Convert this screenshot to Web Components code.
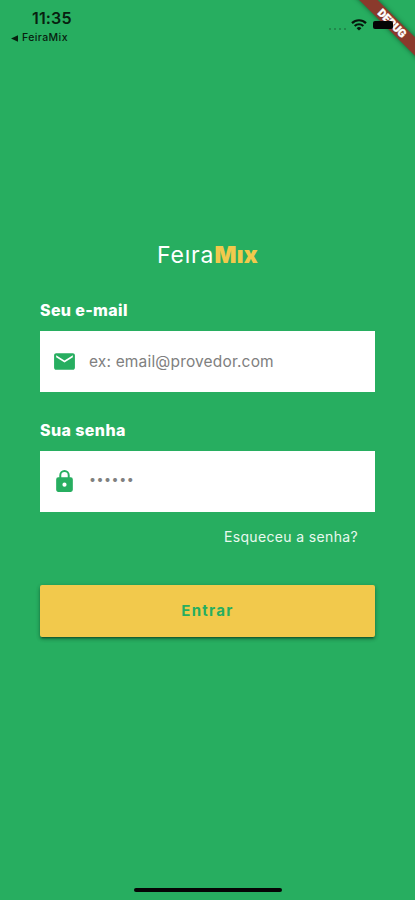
<!DOCTYPE html>
<html lang="pt-BR">
<head>
<meta charset="utf-8">
<meta name="viewport" content="width=device-width, initial-scale=1">
<title>FeiraMix</title>
<style>
  :root {
    --primary-color: #27ae60;
    --accent-color: #f2c94c;
  }
  body {
    margin: 0;
    background: var(--primary-color);
    font-family: Inter, "Open Sans", sans-serif;
  }
</style>
</head>
<body>
<login-page></login-page>

<script>
class StatusBar extends HTMLElement {
  connectedCallback() {
    this.attachShadow({ mode: 'open' });
    this.shadowRoot.innerHTML = `
      <style>
        :host {
          display: flex;
          justify-content: space-between;
          height: 50px;
          color: #08200f;
        }
        .left {
          padding: 8px 0 0 11px;
        }
        .time {
          padding-left: 21px;
          font-size: 16px;
          line-height: 20px;
          font-weight: 600;
          letter-spacing: 0.15px;
        }
        .back {
          display: flex;
          align-items: center;
          gap: 4px;
          margin-top: 3px;
          font-size: 10.5px;
          line-height: 14px;
          font-weight: 500;
          letter-spacing: 0.4px;
        }
        .right {
          position: relative;
          z-index: 2;
          display: flex;
          align-items: flex-start;
          padding: 18px 22px 0 0;
        }
        .signal {
          display: flex;
          gap: 3px;
          margin: 10px 5px 0 0;
        }
        .signal i {
          width: 2px;
          height: 2px;
          background: #20894b;
        }
        .battery {
          width: 20px;
          height: 8px;
          margin: 3px 0 0 6px;
          border-radius: 2px;
          background: #050505;
        }
      </style>
      <div class="left">
        <div class="time">11:35</div>
        <div class="back">
          <svg width="7" height="7" viewBox="0 0 7 7"><path fill="currentColor" d="M0 3.5 7 .3v6.4z"/></svg>
          <span>FeiraMix</span>
        </div>
      </div>
      <div class="right">
        <div class="signal"><i></i><i></i><i></i><i></i></div>
        <svg width="16" height="13" viewBox="0 0 16 13" fill="none" stroke="#06150b" stroke-width="2.2">
          <path d="M1 5.1a10 10 0 0 1 14 0M3.7 8a6.2 6.2 0 0 1 8.6 0"/>
          <path d="M8 12.6 5.6 10.2a3.5 3.5 0 0 1 4.8 0z" fill="#06150b" stroke="none"/>
        </svg>
        <div class="battery"></div>
      </div>
    `;
  }
}

class DebugBanner extends HTMLElement {
  connectedCallback() {
    this.attachShadow({ mode: 'open' });
    this.shadowRoot.innerHTML = `
      <style>
        :host {
          position: absolute;
          top: 0;
          right: 0;
          width: 70px;
          height: 70px;
          overflow: hidden;
        }
        div {
          position: absolute;
          left: -3px;
          top: 17.3px;
          width: 100px;
          height: 12.8px;
          transform: rotate(45deg);
          background: #8a3a2c;
          box-shadow: 0 0 5px rgba(0, 0, 0, 0.45);
          color: #fff;
          font: 900 11px/13px Roboto, sans-serif;
          text-align: center;
          -webkit-text-stroke: 0.4px #fff;
        }
      </style>
      <div><slot></slot></div>
    `;
  }
}

class BrandLogo extends HTMLElement {
  connectedCallback() {
    this.attachShadow({ mode: 'open' });
    this.shadowRoot.innerHTML = `
      <style>
        :host {
          display: block;
          text-align: center;
          font-size: 23px;
          line-height: 28px;
          color: #fff;
          white-space: nowrap;
        }
        .light { letter-spacing: 0.85px; }
        .heavy {
          color: var(--accent-color);
          font-weight: 900;
          letter-spacing: 0.3px;
        }
      </style>
      <span class="light">Feıra</span><span class="heavy">Mıx</span>
    `;
  }
}

class FormField extends HTMLElement {
  connectedCallback() {
    this.attachShadow({ mode: 'open' });
    this.shadowRoot.innerHTML = `
      <style>
        :host { display: block; }
        .label {
          color: #fff;
          font-size: 16px;
          line-height: 20px;
          font-weight: 800;
          letter-spacing: var(--label-spacing, 0);
        }
        .box {
          display: flex;
          align-items: center;
          gap: 12px;
          height: 61px;
          margin-top: 11px;
          padding-left: 12px;
          box-sizing: border-box;
          background: #fff;
        }
        .hint {
          color: #808080;
          font-size: var(--hint-size, 15.5px);
          line-height: 20px;
          letter-spacing: var(--hint-spacing, 0);
          padding-bottom: var(--hint-lift, 0);
        }
        ::slotted(svg) {
          display: block;
          fill: var(--primary-color);
        }
      </style>
      <div class="label">${this.getAttribute('label')}</div>
      <div class="box">
        <slot></slot>
        <span class="hint">${this.getAttribute('hint')}</span>
      </div>
    `;
  }
}

class SubmitButton extends HTMLElement {
  connectedCallback() {
    this.attachShadow({ mode: 'open' });
    this.shadowRoot.innerHTML = `
      <style>
        :host { display: block; }
        button {
          display: block;
          width: 100%;
          height: 52px;
          padding: 0 0 1px;
          border: 0;
          border-radius: 2px;
          background: var(--accent-color);
          color: var(--primary-color);
          font: inherit;
          font-size: 15px;
          font-weight: 700;
          letter-spacing: 1.3px;
          box-shadow: 0 3px 1px -2px rgba(0, 0, 0, 0.2), 0 2px 2px rgba(0, 0, 0, 0.14), 0 1px 5px rgba(0, 0, 0, 0.12), 0 2px 4px rgba(0, 0, 0, 0.2);
        }
      </style>
      <button type="button"><slot></slot></button>
    `;
  }
}

class LoginPage extends HTMLElement {
  connectedCallback() {
    this.attachShadow({ mode: 'open' });
    this.shadowRoot.innerHTML = `
      <style>
        :host {
          position: relative;
          display: flex;
          flex-direction: column;
          height: 900px;
          overflow: hidden;
          background: var(--primary-color);
        }
        main {
          flex: 1;
          padding: 191px 40px 0;
        }
        .email {
          margin-top: 31px;
          --label-spacing: 0.35px;
          --hint-spacing: 0.17px;
        }
        .password {
          margin-top: 28px;
          --label-spacing: 0.4px;
          --hint-size: 12.5px;
          --hint-spacing: 0.5px;
          --hint-lift: 3px;
        }
        .forgot {
          margin: 15px 17px 0 0;
          color: #e9f9ef;
          font-size: 14px;
          line-height: 20px;
          letter-spacing: 0.35px;
          text-align: right;
        }
        submit-button { margin-top: 38px; }
        .home {
          width: 148px;
          height: 4px;
          margin: 0 auto 8px;
          border-radius: 2px;
          background: #050505;
        }
      </style>
      <status-bar></status-bar>
      <debug-banner>DEBUG</debug-banner>
      <main>
        <brand-logo></brand-logo>
        <form-field class="email" label="Seu e-mail" hint="ex: email@provedor.com">
          <svg width="25" height="25" viewBox="0 0 24 24"><path d="M20 4H4c-1.100 0-2 .9-2 2v12c0 1.100.9 2 2 2h16c1.100 0 2-.9 2-2V6c0-1.100-.9-2-2-2zm0 4-8 5-8-5V6l8 5 8-5z"/></svg>
        </form-field>
        <form-field class="password" label="Sua senha" hint="••••••">
          <svg width="25" height="25" viewBox="0 0 24 24"><path d="M18 8h-1V6A5 5 0 0 0 7 6v2H6a2 2 0 0 0-2 2v10c0 1.100.9 2 2 2h12a2 2 0 0 0 2-2V10a2 2 0 0 0-2-2zm-6 9a2 2 0 1 1 0-4 2 2 0 0 1 0 4zm3.100-9H8.900V6a3.100 3.100 0 0 1 6.200 0z"/></svg>
        </form-field>
        <div class="forgot">Esqueceu a senha?</div>
        <submit-button>Entrar</submit-button>
      </main>
      <div class="home"></div>
    `;
  }
}

customElements.define('status-bar', StatusBar);
customElements.define('debug-banner', DebugBanner);
customElements.define('brand-logo', BrandLogo);
customElements.define('form-field', FormField);
customElements.define('submit-button', SubmitButton);
customElements.define('login-page', LoginPage);
</script>
</body>
</html>
